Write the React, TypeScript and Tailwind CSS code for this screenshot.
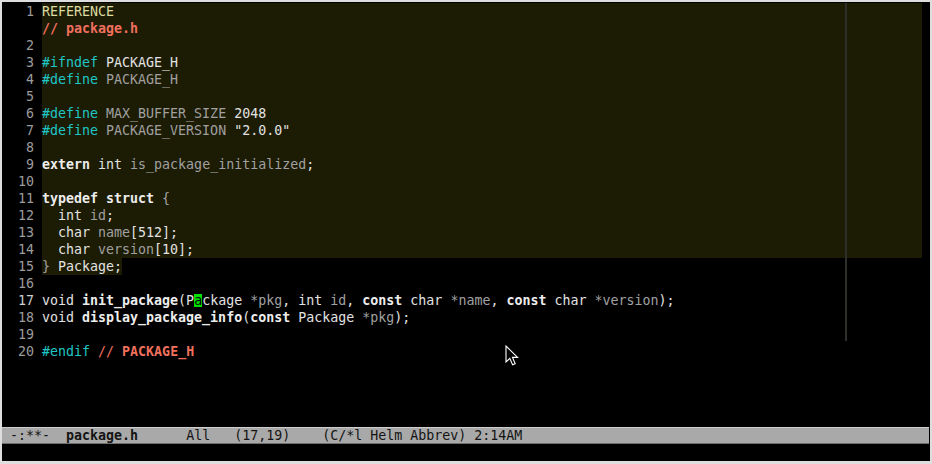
type Seg = [string, string];

const W = "text-[#e2e2e2]";
const G = "text-[#a0a0a0]";
const B = "font-bold text-[#ededed]";
const C = "text-[#1fc6c6]";
const S = "text-[#f0705e]";
const SB = "font-bold text-[#f0705e]";
const Y = "text-[#dcdca2]";

const rows: { num: string; segs: Seg[]; hl: "full" | "text" | "none" }[] = [
  { num: "1", segs: [["REFERENCE", Y]], hl: "full" },
  { num: "", segs: [["// package.h", SB]], hl: "full" },
  { num: "2", segs: [], hl: "full" },
  { num: "3", segs: [["#ifndef", C], [" PACKAGE_H", W]], hl: "full" },
  { num: "4", segs: [["#define", C], [" PACKAGE_H", G]], hl: "full" },
  { num: "5", segs: [], hl: "full" },
  { num: "6", segs: [["#define", C], [" MAX_BUFFER_SIZE", G], [" 2048", W]], hl: "full" },
  { num: "7", segs: [["#define", C], [" PACKAGE_VERSION", G], [' "2.0.0"', W]], hl: "full" },
  { num: "8", segs: [], hl: "full" },
  { num: "9", segs: [["extern", B], [" int ", W], ["is_package_initialized", G], [";", W]], hl: "full" },
  { num: "10", segs: [], hl: "full" },
  { num: "11", segs: [["typedef", B], [" ", W], ["struct", B], [" {", G]], hl: "full" },
  { num: "12", segs: [["  int ", W], ["id", G], [";", W]], hl: "full" },
  { num: "13", segs: [["  char ", W], ["name", G], ["[512];", W]], hl: "full" },
  { num: "14", segs: [["  char ", W], ["version", G], ["[10];", W]], hl: "full" },
  { num: "15", segs: [["} ", G], ["Package;", W]], hl: "text" },
  { num: "16", segs: [], hl: "none" },
  { num: "17", segs: [], hl: "none" },
  { num: "18", segs: [["void ", W], ["display_package_info", B], ["(", W], ["const", B], [" Package ", W], ["*pkg", G], [");", W]], hl: "none" },
  { num: "19", segs: [], hl: "none" },
  { num: "20", segs: [["#endif", C], [" ", W], ["// ", S], ["PACKAGE_H", SB]], hl: "none" },
];

function Segs({ segs }: { segs: Seg[] }) {
  return (
    <>
      {segs.map(([t, c], i) => (
        <span key={i} className={c}>
          {t}
        </span>
      ))}
    </>
  );
}

function CursorLine() {
  return (
    <>
      <span className={W}>void </span>
      <span className={B}>init_package</span>
      <span className={W}>(P</span>
      <span className="inline-block h-[13px] bg-[#00e000] leading-[13px] text-[#0a0a0a]">a</span>
      <span className={W}>ckage </span>
      <span className={G}>*pkg</span>
      <span className={W}>, int </span>
      <span className={G}>id</span>
      <span className={W}>, </span>
      <span className={B}>const</span>
      <span className={W}> char </span>
      <span className={G}>*name</span>
      <span className={W}>, </span>
      <span className={B}>const</span>
      <span className={W}> char </span>
      <span className={G}>*version</span>
      <span className={W}>);</span>
    </>
  );
}

export default function App() {
  return (
    <div className="h-[464px] w-[932px] bg-[#dedede] pb-[3px] pl-[2px] pr-[2px] pt-[2px] font-['DejaVu_Sans_Mono',monospace] text-[13.3px]">
      <div className="relative flex h-full flex-col bg-black">
        <div className="flex-1 pt-px">
          {rows.map((r, i) => (
            <div key={i} className="flex h-[17px] items-center leading-[17px] whitespace-pre">
              <div className={`w-[40px] shrink-0 pr-[8px] text-right ${r.num === "17" ? "text-[#cfcfcf]" : "text-[#9c9c9c]"}`}>
                {r.num}
              </div>
              <div className={`mr-[8px] h-full flex-1 ${r.hl === "full" ? "bg-[#1c1b04]" : ""}`}>
                {r.num === "17" ? (
                  <CursorLine />
                ) : r.hl === "text" ? (
                  <span className="inline-block h-full bg-[#1c1b04]">
                    <Segs segs={r.segs} />
                  </span>
                ) : (
                  <Segs segs={r.segs} />
                )}
              </div>
            </div>
          ))}
        </div>

        <div className="mr-px flex h-[17px] items-center border-b border-t border-b-[#6e6e6e] border-t-[#cdcdcd] bg-[#a9a9a9] pl-[8px] leading-[15px] whitespace-pre text-[#141414]">
          <span>-:**-  </span>
          <span className="font-bold">package.h</span>
          <span>      All   (17,19)    (C/*l Helm Abbrev) 2:14AM</span>
        </div>
        <div className="h-[17px]" />

        <div className="absolute left-[843px] top-px h-[338px] w-[2px] bg-[#2e2e2a]" />

        <svg className="absolute left-[503px] top-[343px]" width="14" height="22" viewBox="0 0 14 22">
          <path d="M1 1 L1 17 L4.8 13.4 L7.6 19.8 L10.2 18.7 L7.5 12.4 L12.6 12.4 Z" fill="#000" stroke="#fff" strokeWidth="1.1" strokeLinejoin="miter" />
        </svg>
      </div>
    </div>
  );
}
